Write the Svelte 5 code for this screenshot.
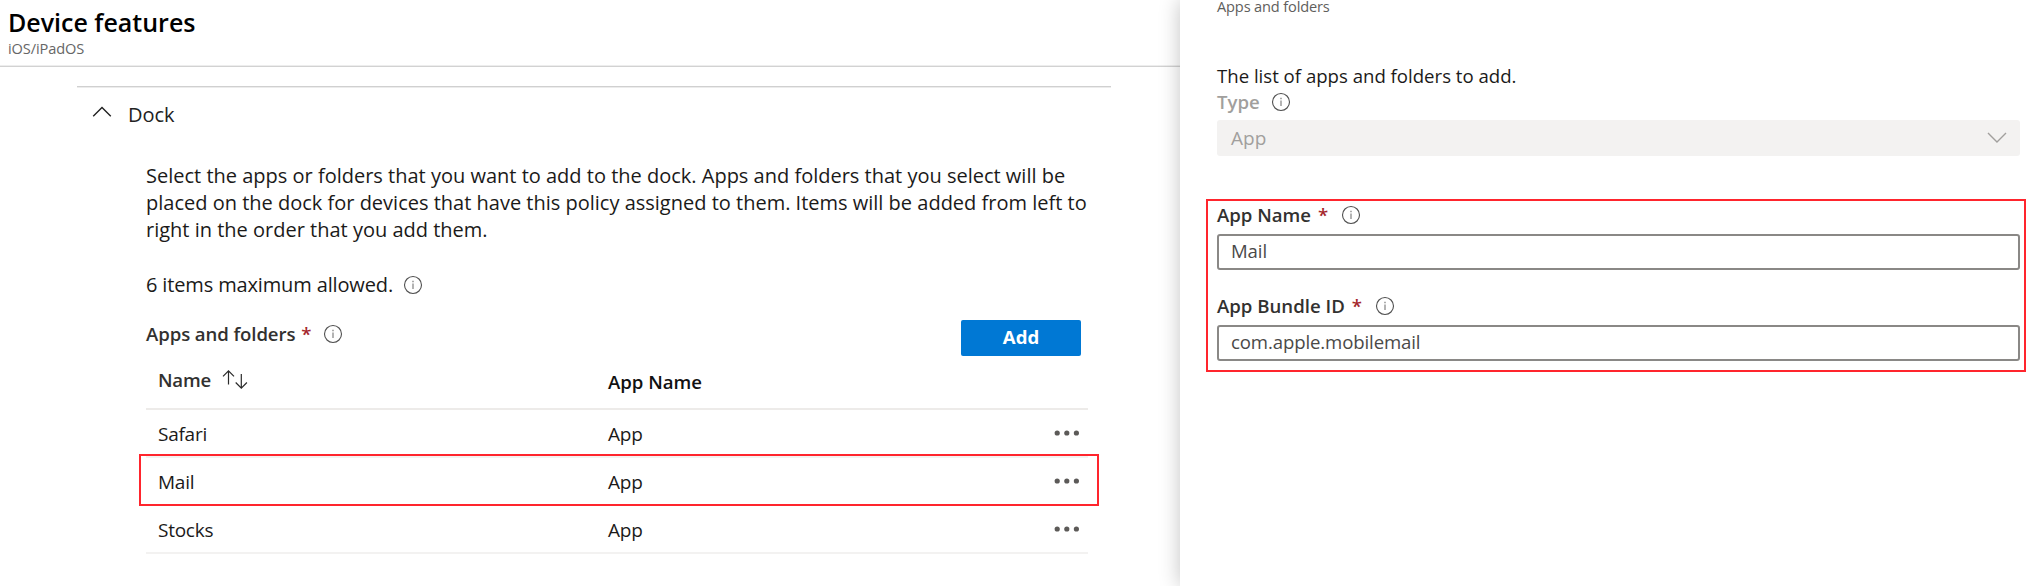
<script>
  const rows = [
    { name: 'Safari', type: 'App' },
    { name: 'Mail', type: 'App', marked: true },
    { name: 'Stocks', type: 'App' }
  ];
  const fields = [
    { label: 'App Name', value: 'Mail' },
    { label: 'App Bundle ID', value: 'com.apple.mobilemail' }
  ];
</script>

{#snippet info()}
  <svg class="info" viewBox="0 0 20 20" width="20" height="20" fill="none">
    <circle cx="10" cy="10" r="8.5" stroke="#505050" stroke-width="1.1" />
    <path d="M10 8.4V14" stroke="#808080" stroke-width="1.2" />
    <path d="M10 5.8v1.4" stroke="#808080" stroke-width="1.3" />
  </svg>
{/snippet}

<div class="page">
  <main class="main">
    <header class="head">
      <h1>Device features</h1>
      <div class="platform">iOS/iPadOS</div>
    </header>

    <section class="section">
      <div class="toggle">
        <svg width="20" height="12" viewBox="0 0 20 12" fill="none">
          <path d="M1.2 10.2L10 1.4l8.8 8.8" stroke="#222" stroke-width="1.4" />
        </svg>
        <span>Dock</span>
      </div>

      <div class="content">
        <p class="desc">
          Select the apps or folders that you want to add to the dock. Apps and folders that you select will be<br />
          placed on the dock for devices that have this policy assigned to them. Items will be added from left to<br />
          right in the order that you add them.
        </p>
        <p class="limit"><span>6 items maximum allowed.</span>{@render info()}</p>

        <div class="listbar">
          <div class="label">Apps and folders<span class="star">*</span>{@render info()}</div>
          <button class="add">Add</button>
        </div>

        <div class="table">
          <div class="row thead">
            <div class="sort">
              <span>Name</span>
              <svg width="26" height="22" viewBox="0 0 26 22" fill="none" stroke="#2b2b2b" stroke-width="1.2">
                <path d="M6.5 15.5V2M1 7.4l5.5-5.5L12 7.4" />
                <path d="M19.3 5v14M13.7 13.5l5.6 5.6 5.6-5.6" />
              </svg>
            </div>
            <div class="second">App Name</div>
          </div>
          {#each rows as row}
            <div class="row" class:marked={row.marked}>
              <div>{row.name}</div>
              <div>{row.type}</div>
              <svg class="dots" width="26" height="8" viewBox="0 0 26 8" fill="#5c5a58">
                <circle cx="3.2" cy="4" r="2.6" />
                <circle cx="12.8" cy="4" r="2.6" />
                <circle cx="22.4" cy="4" r="2.6" />
              </svg>
            </div>
          {/each}
        </div>
      </div>
    </section>
  </main>

  <aside class="panel">
    <div class="crumb">Apps and folders</div>
    <p class="intro">The list of apps and folders to add.</p>
    <div class="label muted">Type{@render info()}</div>
    <div class="select">
      <span>App</span>
      <svg width="20" height="12" viewBox="0 0 20 12" fill="none">
        <path d="M1 1l9 9 9-9" stroke="#a19f9d" stroke-width="1.4" />
      </svg>
    </div>

    <div class="group">
      {#each fields as field}
        <div class="field">
          <div class="label">{field.label}<span class="star">*</span>{@render info()}</div>
          <div class="input">{field.value}</div>
        </div>
      {/each}
    </div>
  </aside>
</div>

<style>
  :global(body) { background: #fff; overflow: hidden; }
  .page {
    display: flex;
    width: 2029px;
    height: 586px;
    overflow: hidden;
    font-family: "Open Sans", "Noto Sans", sans-serif;
    color: #1b1a19;
    background: #fff;
  }
  .main { width: 1180px; flex: none; }
  .head {
    box-sizing: border-box;
    height: 67px;
    padding: 7px 0 0 8px;
    border-bottom: 1px solid #d2d2d2;
    box-shadow: inset 0 -1px #ededed;
  }
  h1 { margin: 0; font-size: 25px; line-height: 30px; font-weight: 600; color: #000; }
  .platform { margin-top: 1px; font-size: 14.6px; line-height: 20px; color: #666; letter-spacing: -0.1px; }

  .section { margin: 19px 69px 0 77px; border-top: 1px solid #d0d0d0; box-shadow: inset 0 1px #ececec; }
  .toggle { display: flex; align-items: flex-start; gap: 16px; padding: 14px 0 0 15px; font-size: 20px; line-height: 27px; color: #222; }
  .toggle svg { margin-top: 5px; }

  .content { width: 942px; margin: 34px 0 0 69px; }
  .desc { margin: 0; font-size: 20px; line-height: 27px; white-space: nowrap; }
  .limit { display: flex; align-items: center; gap: 10px; margin: 28px 0 0; font-size: 20px; line-height: 27px; letter-spacing: -0.14px; }
  .limit span { width: 247px; white-space: nowrap; }

  .label { display: flex; align-items: center; font-size: 18.6px; line-height: 26px; font-weight: 600; color: #323130; white-space: nowrap; }
  .star { margin: 0 0 0 7px; color: #a4262c; }
  .label .info { margin-left: 13px; }
  .info { flex: none; }

  .listbar { display: flex; justify-content: space-between; align-items: flex-start; margin-top: 22px; height: 36px; }
  .listbar .label { height: 28px; letter-spacing: -0.1px; }
  .listbar .star { margin-left: 6px; }
  .listbar .info { margin-left: 12px; }
  .add {
    width: 120px; height: 36px; margin: 0 7px 0 0; padding: 0 0 2px;
    border: 0; border-radius: 2px; background: #0078d4; color: #fff;
    font: 700 18.6px/34px "Open Sans", sans-serif;
  }

  .table { font-size: 19px; line-height: 26px; letter-spacing: -0.25px; }
  .row {
    position: relative;
    display: grid;
    grid-template-columns: 450px 1fr auto;
    align-items: start;
    box-sizing: border-box;
    height: 48px;
    padding: 11px 8px 0 12px;
    border-bottom: 2px solid #f3f2f1;
  }
  .thead { height: 54px; padding-top: 11px; font-size: 18.6px; font-weight: 600; border-bottom-color: #edebe9; letter-spacing: 0; }
  .sort { display: flex; align-items: flex-start; gap: 11px; color: #323130; letter-spacing: -0.2px; }
  .sort svg { margin-top: 2px; }
  .second { padding-top: 2px; color: #111; }
  .dots { margin: 8px 0 0; }
  .marked::after {
    content: "";
    position: absolute;
    inset: -4px -11px -2px -7px;
    border: 2px solid #ff252d;
  }

  .panel {
    position: relative;
    flex: 1;
    min-width: 0;
    padding: 0 9px 0 37px;
    background: #fff;
    box-shadow: 0 0 20px rgba(0, 0, 0, 0.24);
  }
  .crumb { font-size: 14.6px; line-height: 13px; letter-spacing: -0.15px; color: #605e5c; }
  .intro { margin: 50px 0 0; font-size: 18.6px; line-height: 26px; }
  .muted { color: #a19f9d; }
  .muted .info, .panel > .label :global(.info) { margin-left: 11px; }
  .select {
    display: flex; justify-content: space-between; align-items: center;
    box-sizing: border-box; height: 36px; margin-top: 5px; padding: 0 13px 0 14px;
    background: #f3f2f1; border-radius: 3px; color: #a19f9d; font-size: 19px;
  }

  .group { box-sizing: border-box; height: 173px; margin: 43px -6px 0 -11px; padding: 1px 4px 0 9px; border: 2px solid #ff252d; }
  .field { height: 91px; }
  .input {
    box-sizing: border-box; height: 36px; margin-top: 6px; padding: 0 12px;
    border: 2px solid #8a8886; border-radius: 3px;
    font-size: 18.6px; line-height: 30px; letter-spacing: -0.12px; color: #4a4948;
  }
</style>
